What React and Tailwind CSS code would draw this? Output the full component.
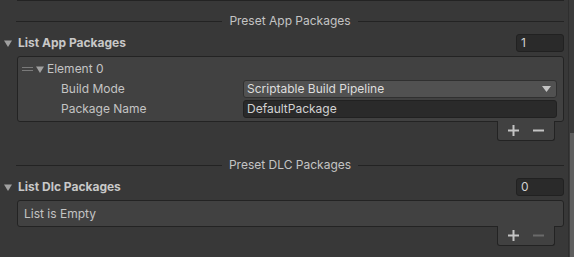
import React from "react";

const Tri = ({ className = "" }) => (
	<svg width="8" height="7" viewBox="0 0 8 7" className={className}>
		<path d="M0 0.5 H8 L4 7 Z" fill="currentColor" />
	</svg>
);

const Separator = ({ title }) => (
	<div className="flex items-center gap-[7px] h-[18px] ml-[16px]">
		<div className="flex-1 h-px bg-[#232323]"></div>
		<span className="text-[#c4c4c4]">{title}</span>
		<div className="flex-1 h-px bg-[#232323]"></div>
	</div>
);

const ListHeader = ({ title, count }) => (
	<div className="flex items-center h-[18px] pl-[4px]">
		<Tri className="text-[#a0a0a0]" />
		<span className="ml-[6px] font-bold text-[#c8c8c8]">{title}</span>
		<div className="ml-auto w-[48px] h-[18px] rounded-[3px] bg-[#2a2a2a] border border-[#212121] flex items-center pl-[4px] text-[#d2d2d2]">
			{count}
		</div>
	</div>
);

const Footer = ({ canRemove }) => (
	<div className="flex justify-end pr-[9px]">
		<div className="-mt-px w-[58px] h-[20px] bg-[#414141] border border-[#232323] border-t-0 rounded-b-[3px] flex items-center justify-center gap-[14px]">
			<svg width="11" height="11" viewBox="0 0 11 11">
				<path d="M4.5 0 H6.5 V4.5 H11 V6.5 H6.5 V11 H4.5 V6.5 H0 V4.5 H4.5 Z" fill="#c4c4c4" />
			</svg>
			<svg width="11" height="11" viewBox="0 0 11 11">
				<path d="M0 4.5 H11 V6.5 H0 Z" fill={canRemove ? "#c4c4c4" : "#6a6a6a"} />
			</svg>
		</div>
	</div>
);

export default function App() {
	return (
		<div className="w-[574px] h-[257px] bg-[#383838] flex overflow-hidden font-['Inter',sans-serif] text-[12px] text-[#c4c4c4] leading-none">
			<div className="flex-1 flex flex-col pr-[4px]">
				<div className="ml-[17px] h-px bg-[#232323]"></div>

				<div className="mt-[11px]">
					<Separator title="Preset App Packages" />
				</div>

				<div className="mt-[4px]">
					<ListHeader title="List App Packages" count="1" />
				</div>

				<div className="mt-[4px] ml-[17px] bg-[#414141] border border-[#232323] rounded-[3px] pt-[3px] pb-[3px] pr-[6px]">
					<div className="flex items-center h-[18px] pl-[4px]">
						<div className="flex flex-col gap-[2px] w-[11px]">
							<div className="h-px bg-[#7a7a7a]"></div>
							<div className="h-px bg-[#7a7a7a]"></div>
						</div>
						<Tri className="ml-[3px] text-[#a0a0a0]" />
						<span className="ml-[3px]">Element 0</span>
					</div>
					<div className="flex items-center h-[18px] mt-[2px]">
						<span className="w-[225px] pl-[43px]">Build Mode</span>
						<div className="flex-1 h-[18px] rounded-[3px] bg-[#515151] border border-[#303030] flex items-center pl-[3px] pr-[5px] text-[#dedede]">
							<span>Scriptable Build Pipeline</span>
							<svg width="9" height="6" viewBox="0 0 9 6" className="ml-auto">
								<path d="M0 0 H9 L4.5 6 Z" fill="#c4c4c4" />
							</svg>
						</div>
					</div>
					<div className="flex items-center h-[18px] mt-[2px]">
						<span className="w-[225px] pl-[43px]">Package Name</span>
						<div className="flex-1 h-[18px] rounded-[3px] bg-[#2a2a2a] border border-[#212121] flex items-center pl-[3px] text-[#d2d2d2]">
							DefaultPackage
						</div>
					</div>
				</div>
				<Footer canRemove />

				<div className="mt-[15px]">
					<Separator title="Preset DLC Packages" />
				</div>

				<div className="mt-[4px]">
					<ListHeader title="List Dlc Packages" count="0" />
				</div>

				<div className="mt-[4px] ml-[17px] h-[27px] bg-[#414141] border border-[#232323] rounded-[3px] flex items-center pl-[6px]">
					List is Empty
				</div>
				<Footer canRemove={false} />
			</div>

			<div className="w-[6px] flex">
				<div className="w-px bg-[#2e2e2e]"></div>
				<div className="flex-1 flex flex-col bg-[#3a3a3a]">
					<div className="h-[133px]"></div>
					<div className="flex-1 ml-px bg-[#5e5e5e]"></div>
				</div>
			</div>
		</div>
	);
}
